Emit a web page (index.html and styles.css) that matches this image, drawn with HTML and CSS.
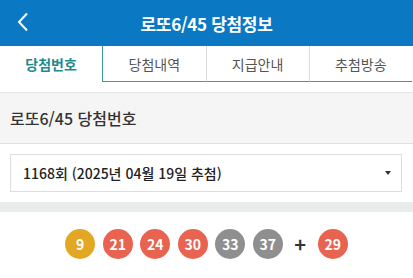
FILE: index.html
```html
<!DOCTYPE html>
<html lang="ko">
<head>
<meta charset="utf-8">
<link rel="stylesheet" href="styles.css">
</head>
<body>
<header class="topbar">
  <span class="back"><svg width="12" height="20" viewBox="0 0 12 20"><path d="M10 1.5 L2 10 L10 18.5" fill="none" stroke="#fff" stroke-width="2"/></svg></span>
  <h1 class="title">로또6/45 당첨정보</h1>
</header>
<nav class="tabs">
  <div class="tab active">당첨번호</div>
  <div class="tab">당첨내역</div>
  <div class="tab">지급안내</div>
  <div class="tab">추첨방송</div>
</nav>
<section class="sec-title">로또6/45 당첨번호</section>
<div class="select-wrap">
  <div class="select"><span>1168회 (2025년 04월 19일 추첨)</span><span class="caret"></span></div>
</div>
<div class="divider"></div>
<div class="balls">
  <span class="ball y">9</span>
  <span class="ball r">21</span>
  <span class="ball r">24</span>
  <span class="ball r">30</span>
  <span class="ball g">33</span>
  <span class="ball g">37</span>
  <span class="plus">+</span>
  <span class="ball r">29</span>
</div>
</body>
</html>
```
FILE: styles.css
```css
* { box-sizing: border-box; }
body {
  margin: 0;
  font-family: "Noto Sans CJK KR", "Noto Sans", sans-serif;
  background: #fff;
  color: #333;
}
.topbar {
  height: 46px;
  background: #0a78c3;
  display: flex;
  align-items: center;
  justify-content: center;
  position: relative;
}
.back {
  position: absolute;
  left: 17px;
  top: 12px;
  display: flex;
}
.title {
  margin: 0;
  color: #fff;
  font-size: 17px;
  font-weight: 700;
  letter-spacing: -0.3px;
}
.tabs {
  display: flex;
  height: 36px;
  padding-right: 1px;
}
.tab {
  flex: 1;
  display: flex;
  align-items: center;
  justify-content: center;
  font-size: 14px;
  color: #555;
  border-bottom: 1px solid #3a9a9a;
  border-left: 1px solid #dcdcdc;
}
.tab.active {
  color: #1f8b8b;
  font-weight: 700;
  border: none;
  border-right: 1px solid #3a9a9a;
}
.tab.active + .tab { border-left: none; }
.sec-title {
  margin-top: 10px;
  height: 52px;
  background: #f5f5f5;
  border-top: 1px solid #e6e6e6;
  border-bottom: 1px solid #e0e0e0;
  display: flex;
  align-items: center;
  padding-left: 10px;
  font-size: 16px;
  font-weight: 500;
  color: #333;
}
.select-wrap {
  padding: 10px 11px 10px 10px;
}
.select {
  height: 38px;
  border: 1px solid #dedede;
  display: flex;
  align-items: center;
  justify-content: space-between;
  padding: 0 10px 0 12px;
  font-size: 14px;
  font-weight: 500;
  color: #222;
}
.caret {
  width: 0;
  height: 0;
  border-left: 3.5px solid transparent;
  border-right: 3.5px solid transparent;
  border-top: 4px solid #333;
}
.divider {
  height: 10px;
  background: #e9ecec;
}
.balls {
  display: flex;
  justify-content: center;
  align-items: center;
  gap: 7.5px;
  padding-top: 17px;
}
.ball {
  width: 30px;
  height: 30px;
  border-radius: 50%;
  display: flex;
  align-items: center;
  justify-content: center;
  color: #fff;
  font-size: 14px;
  font-weight: 700;
}
.ball.y { background: #e3a823; }
.ball.r { background: #e86350; }
.ball.g { background: #8f8f8f; }
.plus {
  width: 20px;
  text-align: center;
  font-size: 20px;
  font-weight: 700;
  color: #333;
  line-height: 1;
}
```
